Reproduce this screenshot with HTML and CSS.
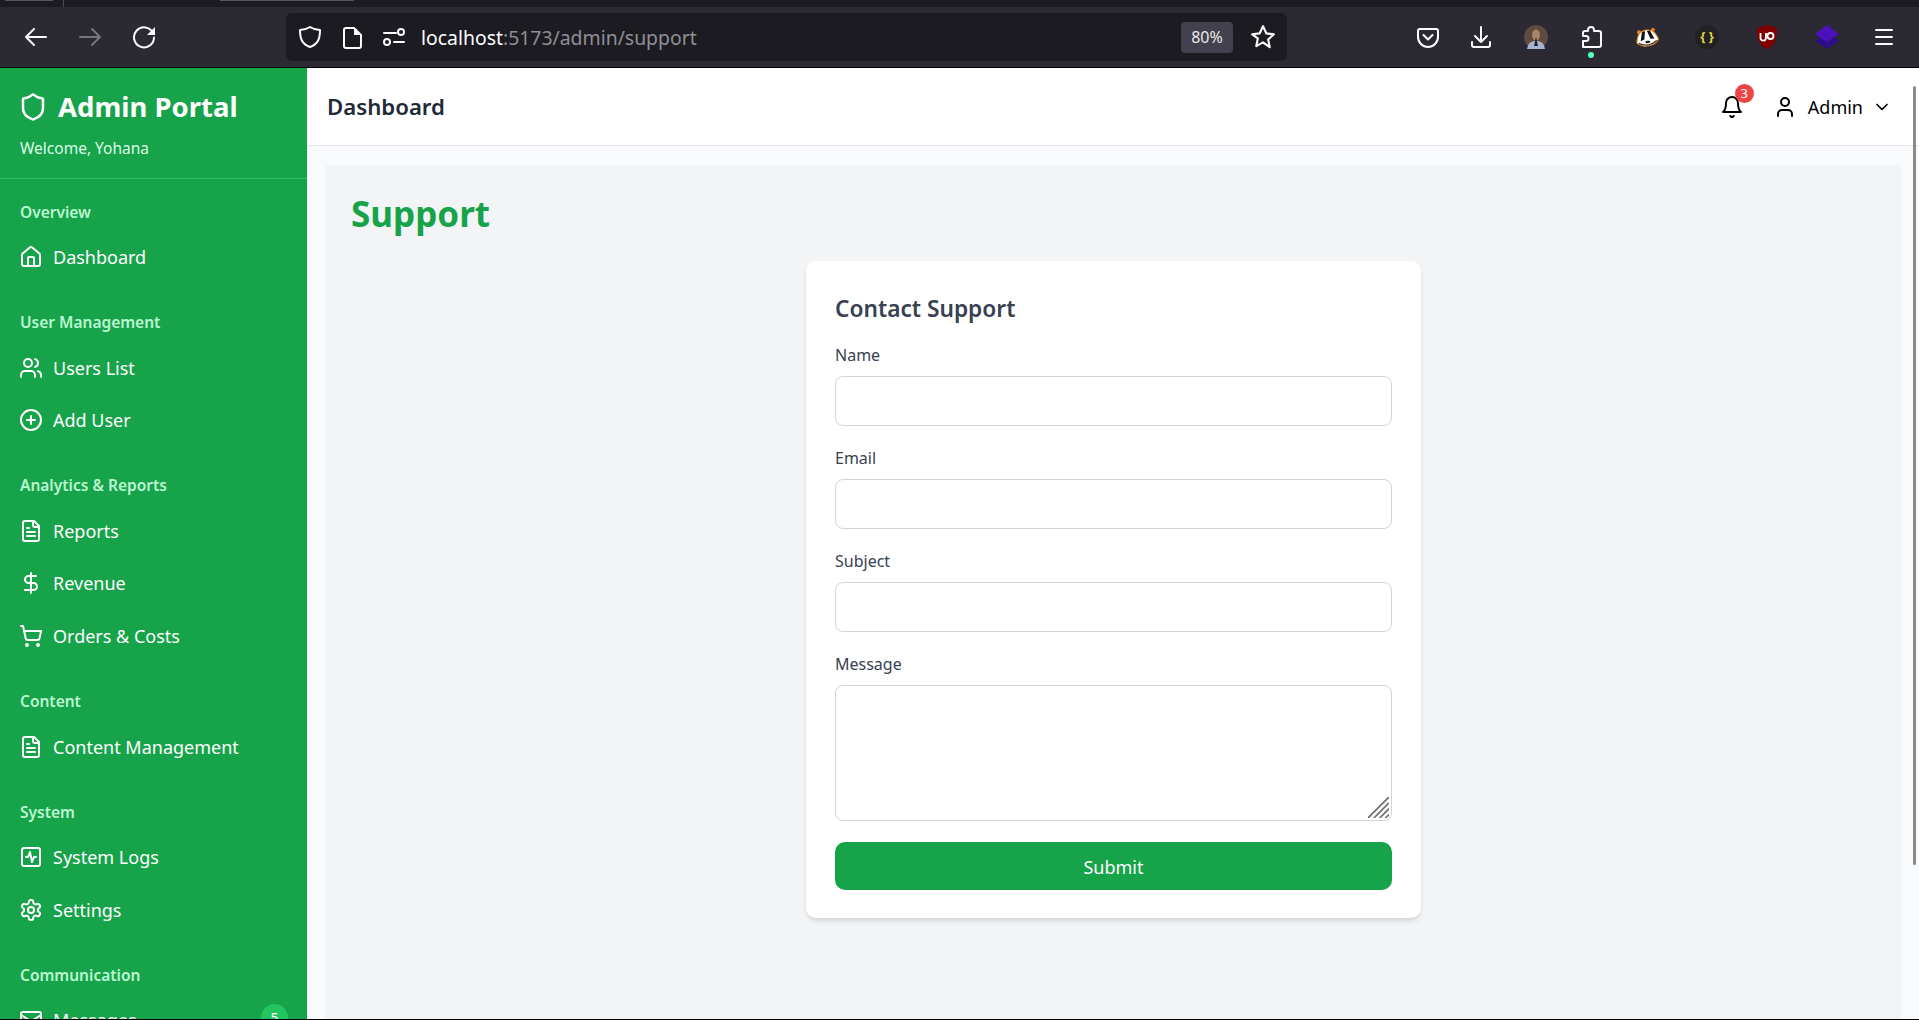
FILE: index.html
```html
<!DOCTYPE html>
<html lang="en">
<head>
    <meta charset="UTF-8">
    <meta name="viewport" content="width=device-width, initial-scale=1.0">
    <title>Admin Portal - Support</title>
    <link rel="stylesheet" href="styles.css">
</head>
<body>
    <div class="tabstrip">
        <span class="tab-edge tab-edge-a"></span>
        <span class="tab-sep"></span>
        <span class="tab-edge tab-edge-b"></span>
    </div>

    <div class="toolbar">
        <div class="nav-btns">
            <svg class="ff-icon" viewBox="0 0 24 24"><path d="M22 12H2M10 4l-8 8 8 8"/></svg>
            <svg class="ff-icon dim" viewBox="0 0 24 24"><path d="M2 12h20M14 4l8 8-8 8"/></svg>
            <svg class="ff-icon" viewBox="0 0 24 24"><path d="M21 8A10 10 0 1 0 22 12.500"/><path class="solid" d="M23 2v8h-8z"/></svg>
        </div>
        <div class="urlbar">
            <svg class="ff-icon" viewBox="0 0 24 24"><path d="M12 2c3 2 6 3 10 3 0 9-2 14-10 17C4 19 2 14 2 5c4 0 7-1 10-3z"/></svg>
            <svg class="ff-icon page-icon" viewBox="0 0 24 24"><path d="M4 5a2 2 0 0 1 2-2h8l7 7v11a2 2 0 0 1-2 2H6a2 2 0 0 1-2-2z"/><path class="solid" d="M14 3l7 7h-7z"/></svg>
            <svg class="ff-icon perm-icon" viewBox="0 0 24 24"><path d="M2 8h12M12 17h10"/><circle cx="19" cy="7" r="3"/><circle cx="5" cy="17" r="3"/></svg>
            <div class="url-text">localhost<span class="url-dim">:5173/admin/support</span></div>
            <div class="zoom-pill">80%</div>
            <svg class="ff-icon star-icon" viewBox="0 0 24 24"><path d="M12 2l3 6.600 7 .9-5.200 4.800 1.400 7.100L12 17l-6.200 3.400 1.400-7.100L2 9.500l7-.9z"/></svg>
        </div>
        <div class="addons">
            <svg class="ff-icon" viewBox="0 0 24 24"><path d="M4 4h16a2 2 0 0 1 2 2v6a10 10 0 0 1-20 0V6a2 2 0 0 1 2-2z"/><path d="M7.500 10l4.500 4.500 4.500-4.500"/></svg>
            <svg class="ff-icon addon-tight" viewBox="0 0 24 24"><path d="M12 2v15M6 11l6 6 6-6M3 17v3a2 2 0 0 0 2 2h14a2 2 0 0 0 2-2v-3"/></svg>
            <svg class="addon-img" viewBox="0 0 24 24"><circle cx="12" cy="12" r="12" fill="#5f4c41"/><path d="M3 24c1-6 4-8 9-8s8 2 9 8z" fill="#a4b5d2"/><ellipse cx="12" cy="10" rx="4" ry="5.500" fill="#a98466"/><path d="M10 21l2-9 2 9z" fill="#2b2320"/></svg>
            <div class="puzzle">
                <svg class="ff-icon" viewBox="0 0 24 24"><path d="M9 6V5a3 3 0 0 1 6 0v1h5a2 2 0 0 1 2 2v12a2 2 0 0 1-2 2H4v-6h3a2 2 0 0 0 0-5H4V8a2 2 0 0 1 2-2z"/></svg>
                <span class="puzzle-dot"></span>
            </div>
            <svg class="addon-img addon-badger" viewBox="0 0 24 20">
                <g transform="rotate(-10 12 10)">
                    <circle cx="5" cy="4" r="2" fill="#e8841f"/>
                    <circle cx="19" cy="4" r="2" fill="#e8841f"/>
                    <path d="M1 14C3 6 6 3 12 3s9 3 11 11c-3 4-7 5-11 5s-8-1-11-5z" fill="#fff" stroke="#e8841f" stroke-width="1"/>
                    <path d="M8 4L5 13l4-1 2-8zM16 4l3 9-4-1-2-8z" fill="#111"/>
                    <path d="M3 15c3 2 6 3 9 3s6-1 9-3" fill="none" stroke="#111" stroke-width="1"/>
                    <ellipse cx="12" cy="15" rx="2.500" ry="1.200" fill="#111"/>
                </g>
            </svg>
            <div class="braces addon-wide">{ }</div>
            <svg class="addon-img addon-wide" viewBox="0 0 24 24"><path d="M12 0l10 3c0 11-1 17-10 21C3 20 2 14 2 3z" fill="#800000"/><path d="M5.500 8v5a2.700 2.700 0 0 0 5.400 0V8" fill="none" stroke="#fff" stroke-width="1.800"/><circle cx="15.500" cy="11" r="3" fill="none" stroke="#fff" stroke-width="1.800"/></svg>
            <svg class="addon-img addon-wide" viewBox="0 0 24 24"><path d="M12 7l12 9-12 8L0 16z" fill="#2a0f85"/><path d="M12 0l12 9-12 8L0 9z" fill="#4a12b8"/></svg>
            <svg class="ff-icon addon-menu" viewBox="0 0 24 24"><path d="M4 5h16M4 12h16M4 19h16"/></svg>
        </div>
    </div>

    <div class="app">
        <aside class="sidebar">
            <div class="side-head">
                <div class="brand">
                    <svg class="icon brand-icon" viewBox="0 0 24 24"><path d="M20 13c0 5-3.500 7.500-7.660 8.950a1 1 0 0 1-.67-.01C7.500 20.500 4 18 4 13V6a1 1 0 0 1 1-1c2 0 4.500-1.200 6.240-2.720a1.170 1.170 0 0 1 1.520 0C14.510 3.810 17 5 19 5a1 1 0 0 1 1 1z"/></svg>
                    <span>Admin Portal</span>
                </div>
                <div class="welcome">Welcome, Yohana</div>
            </div>

            <div class="side-section">
                <div class="side-label">Overview</div>
                <a class="side-item">
                    <svg class="icon" viewBox="0 0 24 24"><path d="M15 21v-8a1 1 0 0 0-1-1h-4a1 1 0 0 0-1 1v8"/><path d="M3 10a2 2 0 0 1 .709-1.528l7-5.999a2 2 0 0 1 2.582 0l7 5.999A2 2 0 0 1 21 10v9a2 2 0 0 1-2 2H5a2 2 0 0 1-2-2z"/></svg>
                    Dashboard
                </a>
            </div>

            <div class="side-section">
                <div class="side-label">User Management</div>
                <a class="side-item">
                    <svg class="icon" viewBox="0 0 24 24"><path d="M16 21v-2a4 4 0 0 0-4-4H6a4 4 0 0 0-4 4v2"/><circle cx="9" cy="7" r="4"/><path d="M22 21v-2a4 4 0 0 0-3-3.870"/><path d="M16 3.130a4 4 0 0 1 0 7.750"/></svg>
                    Users List
                </a>
                <a class="side-item">
                    <svg class="icon" viewBox="0 0 24 24"><circle cx="12" cy="12" r="10"/><path d="M8 12h8M12 8v8"/></svg>
                    Add User
                </a>
            </div>

            <div class="side-section">
                <div class="side-label">Analytics &amp; Reports</div>
                <a class="side-item">
                    <svg class="icon" viewBox="0 0 24 24"><path d="M15 2H6a2 2 0 0 0-2 2v16a2 2 0 0 0 2 2h12a2 2 0 0 0 2-2V7Z"/><path d="M14 2v4a2 2 0 0 0 2 2h4"/><path d="M10 9H8M16 13H8M16 17H8"/></svg>
                    Reports
                </a>
                <a class="side-item">
                    <svg class="icon" viewBox="0 0 24 24"><path d="M12 2v20"/><path d="M17 5H9.500a3.500 3.500 0 0 0 0 7h5a3.500 3.500 0 0 1 0 7H6"/></svg>
                    Revenue
                </a>
                <a class="side-item">
                    <svg class="icon" viewBox="0 0 24 24"><circle cx="8" cy="21" r="1"/><circle cx="19" cy="21" r="1"/><path d="M2.050 2.050h2l2.660 12.420a2 2 0 0 0 2 1.580h9.780a2 2 0 0 0 1.950-1.570l1.650-7.430H5.120"/></svg>
                    Orders &amp; Costs
                </a>
            </div>

            <div class="side-section">
                <div class="side-label">Content</div>
                <a class="side-item">
                    <svg class="icon" viewBox="0 0 24 24"><path d="M15 2H6a2 2 0 0 0-2 2v16a2 2 0 0 0 2 2h12a2 2 0 0 0 2-2V7Z"/><path d="M14 2v4a2 2 0 0 0 2 2h4"/><path d="M10 9H8M16 13H8M16 17H8"/></svg>
                    Content Management
                </a>
            </div>

            <div class="side-section">
                <div class="side-label">System</div>
                <a class="side-item">
                    <svg class="icon" viewBox="0 0 24 24"><rect x="3" y="3" width="18" height="18" rx="2"/><path d="M17 12h-2l-2 5-2-10-2 5H7"/></svg>
                    System Logs
                </a>
                <a class="side-item">
                    <svg class="icon" viewBox="0 0 24 24"><path d="M12.220 2h-.44a2 2 0 0 0-2 2v.18a2 2 0 0 1-1 1.730l-.43.25a2 2 0 0 1-2 0l-.15-.08a2 2 0 0 0-2.730.73l-.22.38a2 2 0 0 0 .73 2.730l.15.1a2 2 0 0 1 1 1.720v.51a2 2 0 0 1-1 1.740l-.15.09a2 2 0 0 0-.73 2.730l.22.38a2 2 0 0 0 2.730.73l.15-.08a2 2 0 0 1 2 0l.43.25a2 2 0 0 1 1 1.730V20a2 2 0 0 0 2 2h.44a2 2 0 0 0 2-2v-.18a2 2 0 0 1 1-1.730l.43-.25a2 2 0 0 1 2 0l.15.08a2 2 0 0 0 2.730-.73l.22-.39a2 2 0 0 0-.73-2.730l-.15-.08a2 2 0 0 1-1-1.740v-.5a2 2 0 0 1 1-1.740l.15-.09a2 2 0 0 0 .73-2.730l-.22-.38a2 2 0 0 0-2.730-.73l-.15.08a2 2 0 0 1-2 0l-.43-.25a2 2 0 0 1-1-1.730V4a2 2 0 0 0-2-2z"/><circle cx="12" cy="12" r="3"/></svg>
                    Settings
                </a>
            </div>

            <div class="side-section">
                <div class="side-label">Communication</div>
                <a class="side-item">
                    <svg class="icon" viewBox="0 0 24 24"><rect x="2" y="4" width="20" height="16" rx="2"/><path d="m22 7-8.970 5.700a1.940 1.940 0 0 1-2.060 0L2 7"/></svg>
                    Messages
                    <span class="side-badge">5</span>
                </a>
            </div>
        </aside>

        <div class="main">
            <header class="topbar">
                <h2 class="topbar-title">Dashboard</h2>
                <div class="topbar-right">
                    <div class="bell">
                        <svg class="icon" viewBox="0 0 24 24"><path d="M6 8a6 6 0 0 1 12 0c0 7 3 9 3 9H3s3-2 3-9"/><path d="M10.300 21a1.940 1.940 0 0 0 3.400 0"/></svg>
                        <span class="bell-count">3</span>
                    </div>
                    <div class="user-menu">
                        <svg class="icon" viewBox="0 0 24 24"><path d="M19 21v-2a4 4 0 0 0-4-4H9a4 4 0 0 0-4 4v2"/><circle cx="12" cy="7" r="4"/></svg>
                        <span>Admin</span>
                        <svg class="icon chevron" viewBox="0 0 24 24"><path d="m6 9 6 6 6-6"/></svg>
                    </div>
                </div>
            </header>

            <main class="content">
                <div class="panel">
                    <h1 class="page-title">Support</h1>
                    <form class="card">
                        <h3 class="card-title">Contact Support</h3>
                        <label class="field-label">Name</label>
                        <input class="field" type="text">
                        <label class="field-label">Email</label>
                        <input class="field" type="email">
                        <label class="field-label">Subject</label>
                        <input class="field" type="text">
                        <label class="field-label">Message</label>
                        <div class="area-wrap">
                            <textarea class="field field-area"></textarea>
                            <svg class="grip" viewBox="0 0 18 18"><path d="M0 18L18 0M5 18L18 5M10 18l8-8M15 18l3-3"/></svg>
                        </div>
                        <button class="submit" type="button">Submit</button>
                    </form>
                </div>
            </main>
            <div class="scroll-thumb"></div>
        </div>
    </div>
</body>
</html>
```

FILE: styles.css
```css
* {
    box-sizing: border-box;
}

html, body {
    height: 100%;
}

body {
    margin: 0;
    background-color: #000;
    font-family: "Noto Sans", "Open Sans", sans-serif;
    overflow: hidden;
}

/* browser chrome */
.tabstrip {
    position: relative;
    height: 7px;
    background-color: #1c1b22;
}

.tab-edge {
    position: absolute;
    top: 0;
    height: 1px;
    background-color: #55545c;
}

.tab-edge-a {
    left: 5px;
    width: 48px;
}

.tab-edge-b {
    left: 220px;
    width: 134px;
}

.tab-sep {
    position: absolute;
    left: 63px;
    top: 0;
    width: 1px;
    height: 7px;
    background-color: #4a4950;
}

.toolbar {
    display: flex;
    align-items: center;
    height: 60px;
    background-color: #2b2a33;
    color: #fbfbfe;
}

.ff-icon {
    width: 24px;
    height: 24px;
    flex: none;
    fill: none;
    stroke: #fbfbfe;
    stroke-width: 2;
    stroke-linecap: round;
    stroke-linejoin: round;
}

.ff-icon .solid {
    fill: #fbfbfe;
    stroke: none;
}

.ff-icon.dim {
    stroke: #77767c;
}

.nav-btns {
    display: flex;
    gap: 30px;
    margin-left: 24px;
    width: 262px;
}

.urlbar {
    display: flex;
    align-items: center;
    width: 1001px;
    height: 48px;
    padding: 0 11px 0 12px;
    background-color: #1c1b22;
    border-radius: 6px;
}

.page-icon {
    margin-left: 18px;
}

.perm-icon {
    margin-left: 18px;
}

.url-text {
    margin-left: 15px;
    flex: 1;
    font-size: 19.4px;
    color: #fbfbfe;
}

.url-dim {
    color: #8f8f94;
}

.zoom-pill {
    width: 52px;
    height: 31px;
    line-height: 31px;
    text-align: center;
    font-size: 16px;
    color: #e8e8ea;
    background-color: #42414d;
    border-radius: 4px;
}

.star-icon {
    width: 26px;
    height: 26px;
    margin-left: 17px;
}

.addons {
    display: flex;
    align-items: center;
    gap: 31px;
    margin-left: 129px;
}

.addon-img {
    width: 24px;
    height: 24px;
    flex: none;
}

.addon-tight {
    margin-left: -2px;
}

.addon-badger {
    margin-left: 1px;
}

.addon-wide {
    margin-left: 5px;
}

.addon-menu {
    margin-left: 2px;
}

.puzzle {
    position: relative;
    display: flex;
}

.puzzle-dot {
    position: absolute;
    left: 9px;
    top: 27px;
    width: 6px;
    height: 6px;
    border-radius: 50%;
    background-color: #54ffbd;
}

.braces {
    width: 24px;
    height: 24px;
    flex: none;
    line-height: 22px;
    text-align: center;
    font-size: 13px;
    font-weight: 700;
    color: #e8d44d;
    background-color: #222;
    border-radius: 50%;
}

/* app */
.app {
    display: flex;
    height: 951px;
    margin-top: 1px;
}

.icon {
    width: 24px;
    height: 24px;
    flex: none;
    fill: none;
    stroke: currentColor;
    stroke-width: 2;
    stroke-linecap: round;
    stroke-linejoin: round;
}

.sidebar {
    width: 307px;
    flex: none;
    overflow: hidden;
    background-color: #16a34a;
    color: #fff;
}

.side-head {
    height: 111px;
    padding: 20px 20px 0;
    border-bottom: 1px solid #22c55e;
}

.brand {
    display: flex;
    align-items: center;
    gap: 10px;
    font-size: 27.5px;
    line-height: 38px;
    font-weight: 700;
}

.brand-icon {
    width: 30px;
    height: 30px;
    margin-left: -2px;
}

.welcome {
    margin-top: 11px;
    font-size: 15.5px;
    line-height: 22px;
    color: #dcfce7;
}

.side-section {
    padding: 21.5px 0 6.3px;
}

.side-label {
    margin-bottom: 8.2px;
    padding-left: 20px;
    font-size: 15.5px;
    line-height: 22px;
    font-weight: 600;
    color: #bbf7d0;
}

.side-item {
    display: flex;
    align-items: center;
    gap: 10px;
    height: 52.6px;
    padding: 0 19px;
    font-size: 18px;
}

.side-badge {
    width: 27px;
    height: 27px;
    margin-left: auto;
    margin-top: -5px;
    line-height: 27px;
    text-align: center;
    font-size: 14px;
    background-color: #22c55e;
    border-radius: 50%;
}

.main {
    position: relative;
    flex: 1;
    display: flex;
    flex-direction: column;
    min-width: 0;
}

.topbar {
    display: flex;
    align-items: center;
    justify-content: space-between;
    height: 78px;
    padding: 0 27px 0 20px;
    background-color: #fff;
    border-bottom: 1px solid #e5e7eb;
}

.topbar-title {
    margin: 0;
    font-size: 22.2px;
    font-weight: 600;
    color: #1f2937;
}

.topbar-right {
    display: flex;
    align-items: center;
    gap: 29px;
    color: #000;
}

.bell {
    position: relative;
    display: flex;
}

.bell-count {
    position: absolute;
    top: -11px;
    right: -10px;
    width: 19px;
    height: 19px;
    line-height: 19px;
    text-align: center;
    font-size: 13px;
    color: #fff;
    background-color: #ef4444;
    border-radius: 50%;
}

.user-menu {
    display: flex;
    align-items: center;
    gap: 11px;
    font-size: 18px;
}

.chevron {
    width: 20px;
    height: 20px;
    margin-left: -2px;
}

.content {
    flex: 1;
    padding: 19px 17px 0 19px;
    background-color: #f9fafb;
}

.panel {
    height: 100%;
    padding: 25px 26px 0 25px;
    background-color: #f3f4f6;
}

.page-title {
    margin: 0;
    font-size: 35px;
    line-height: 48px;
    font-weight: 700;
    color: #16a34a;
}

.card {
    display: flex;
    flex-direction: column;
    width: 615px;
    margin: 23px auto 0;
    padding: 29px 29px 28px;
    background-color: #fff;
    border-radius: 10px;
    box-shadow: 0 4px 6px -1px rgba(0, 0, 0, 0.1), 0 2px 4px -2px rgba(0, 0, 0, 0.1);
}

.card-title {
    margin: 0 0 17px;
    font-size: 22.7px;
    line-height: 38px;
    font-weight: 600;
    color: #374151;
}

.field-label {
    margin-bottom: 10px;
    font-size: 16px;
    line-height: 21px;
    color: #374151;
}

.field {
    display: block;
    width: 100%;
    height: 50px;
    margin-bottom: 22px;
    padding: 8px 12px;
    background-color: #fff;
    border: 1px solid #d1d5db;
    border-radius: 8px;
    outline: none;
}

.area-wrap {
    position: relative;
}

.field-area {
    height: 136px;
    margin-bottom: 21px;
    resize: none;
}

.grip {
    position: absolute;
    right: 3px;
    top: 112px;
    width: 21px;
    height: 21px;
    fill: none;
    stroke: #6f6f6f;
    stroke-width: 1.5;
}

.submit {
    height: 48px;
    padding-top: 2px;
    font-family: inherit;
    font-size: 18px;
    color: #fff;
    background-color: #16a34a;
    border: none;
    border-radius: 10px;
}

.scroll-thumb {
    position: absolute;
    right: 3px;
    top: 18px;
    width: 3px;
    height: 779px;
    background-color: #8a8a8a;
    border-radius: 2px;
}
```
